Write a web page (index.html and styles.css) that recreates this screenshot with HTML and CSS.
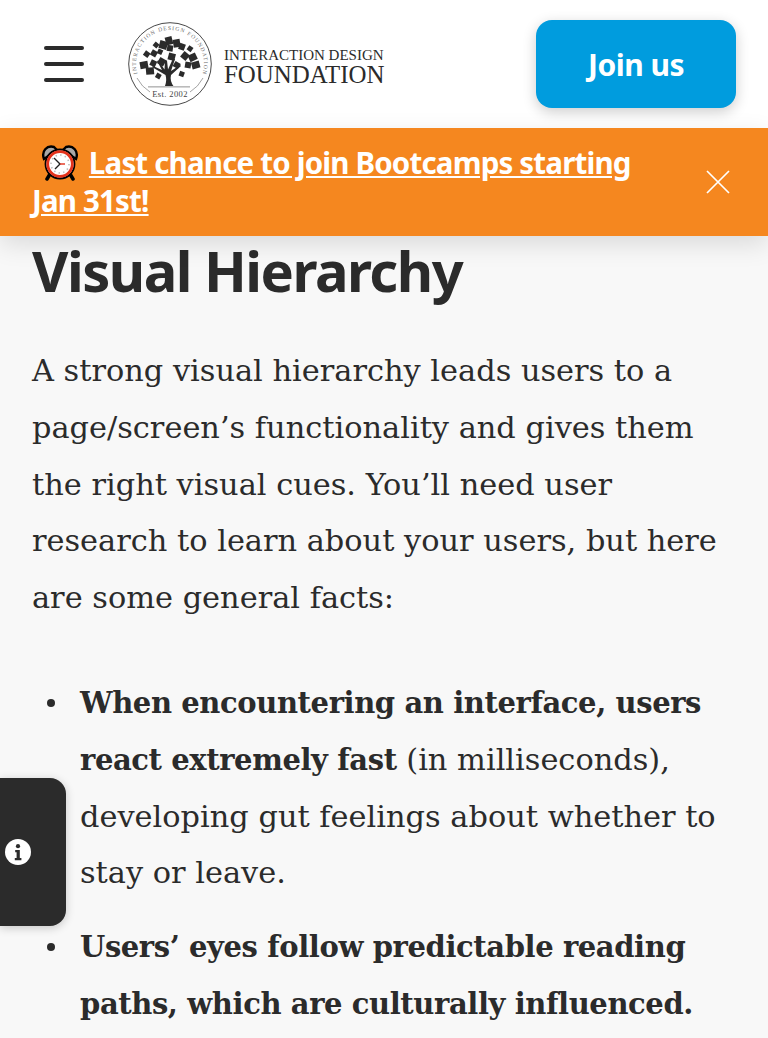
FILE: index.html
```html
<!DOCTYPE html>
<html lang="en">

<head>
    <meta charset="UTF-8">
    <meta name="viewport" content="width=device-width, initial-scale=1.0">
    <title>Visual Hierarchy</title>
    <link rel="stylesheet" href="styles.css">
</head>

<body>
    <header class="site-header">
        <button class="menu-btn" aria-label="Menu">
            <span></span>
            <span></span>
            <span></span>
        </button>
        <a href="#" class="logo">
            <svg class="logo-mark" viewBox="0 0 84 84" width="84" height="84">
                <defs>
                    <path id="logoArc" d="M10.05 53.6A34 34 0 1 1 73.95 53.6"></path>
                </defs>
                <circle cx="42" cy="42" r="41.3" fill="#fff" stroke="#333" stroke-width="0.9"></circle>
                <path d="M9 56a36 36 0 0 0 13 14M75 56a36 36 0 0 1-13 14" fill="none" stroke="#666" stroke-width="0.6"></path>
                <text class="logo-ring" font-size="5.6"><textPath href="#logoArc" startOffset="50%" text-anchor="middle" textLength="126">INTERACTION DESIGN FOUNDATION</textPath></text>
                <path d="M37 64c1.500-4 1.500-8 .5-11L24 45l1-1 9 4-5-9 1.500-.5 6 9 .5-9h2l1 9 5-11 2 .5-4 12 9-6 1 1-10 9c-1 4 0 8 3 12z" fill="#2b2b2b"></path>
                <g fill="#2b2b2b">
                    <rect x="26" y="20.300" width="5" height="5" transform="rotate(40 28 22.300)"></rect>
                    <rect x="31.300" y="19" width="8" height="8" transform="rotate(15 35.300 23)"></rect>
                    <rect x="37.500" y="14.700" width="7" height="8" transform="rotate(-15 41 18.700)"></rect>
                    <rect x="45.200" y="17.300" width="7" height="8" transform="rotate(-10 48.700 21.300)"></rect>
                    <rect x="51" y="21.500" width="6" height="6.500" transform="rotate(20 54 24.700)"></rect>
                    <rect x="59.500" y="24.200" width="5" height="5" transform="rotate(35 62 26.700)"></rect>
                    <rect x="16" y="29.300" width="5.500" height="5.500" transform="rotate(35 18.700 32)"></rect>
                    <rect x="23" y="28.300" width="6" height="6" transform="rotate(30 26 31.300)"></rect>
                    <rect x="29.500" y="27.200" width="5" height="5" transform="rotate(25 32 29.700)"></rect>
                    <rect x="39" y="23.300" width="6" height="6" transform="rotate(10 42 26.300)"></rect>
                    <rect x="53.500" y="30.500" width="7" height="7" transform="rotate(40 57 34)"></rect>
                    <rect x="60.700" y="31.800" width="8" height="7" transform="rotate(-25 64.700 35.300)"></rect>
                    <rect x="63.700" y="39.500" width="8" height="7" transform="rotate(-15 67.700 43)"></rect>
                    <rect x="57" y="40" width="6" height="6" transform="rotate(10 60 43)"></rect>
                    <rect x="12" y="39.500" width="8" height="7" transform="rotate(-10 16 43)"></rect>
                    <rect x="22.300" y="38.300" width="6" height="6" transform="rotate(25 25.300 41.300)"></rect>
                    <rect x="30.200" y="36.200" width="7" height="7" transform="rotate(30 33.700 39.700)"></rect>
                    <rect x="40.200" y="31.200" width="7" height="7" transform="rotate(15 43.700 34.700)"></rect>
                    <rect x="45.700" y="40" width="6" height="6" transform="rotate(30 48.700 43)"></rect>
                    <rect x="18" y="45.500" width="8" height="7" transform="rotate(-5 22 49)"></rect>
                    <rect x="27.800" y="51.500" width="5" height="5" transform="rotate(30 30.300 54)"></rect>
                    <rect x="51.200" y="49.500" width="5" height="5" transform="rotate(20 53.700 52)"></rect>
                </g>
                <rect x="20" y="64" width="42" height="1.600" fill="#bbb"></rect>
                <text class="logo-est" x="42" y="74.500" text-anchor="middle">Est. 2002</text>
            </svg>
            <span class="logo-text">
                <span class="logo-top">INTERACTION DESIGN</span>
                <span class="logo-name">FOUNDATION</span>
            </span>
        </a>
        <a href="#" class="join-btn">Join us</a>
    </header>

    <div class="banner">
        <p class="banner-text">
            <svg class="alarm" viewBox="0 0 38 36" width="38" height="36">
                <path d="M3 14C0 6 6 0 13 2l3 3zM35 14c3-8-3-14-10-12l-3 3z" fill="#a8a8a8" stroke="#000" stroke-width="2.400"></path>
                <path d="M9 29l-3 5M29 29l3 5" stroke="#000" stroke-width="3.500" stroke-linecap="round"></path>
                <circle cx="19" cy="19" r="14.500" fill="#fff" stroke="#000" stroke-width="1.800"></circle>
                <circle cx="19" cy="19" r="12.300" fill="#fff" stroke="#e4321b" stroke-width="2.800"></circle>
                <circle cx="19" cy="19" r="9" fill="none" stroke="#bbb" stroke-width="1.600" stroke-dasharray="1.400 3.300"></circle>
                <path d="M13 13l6 6-5 5" fill="none" stroke="#222" stroke-width="1.400"></path>
                <path d="M19 19h5" stroke="#e4321b" stroke-width="1.400"></path>
            </svg>
            <a href="#">Last chance to join Bootcamps starting<br>Jan 31st!</a>
        </p>
        <button class="banner-close" aria-label="Close">
            <svg viewBox="0 0 24 24" width="24" height="24">
                <path d="M1 1l22 22M23 1L1 23" fill="none" stroke="#fff" stroke-width="1.700"></path>
            </svg>
        </button>
    </div>

    <main class="article">
        <h1>Visual Hierarchy</h1>
        <p>A strong visual hierarchy leads users to a<br>page/screen’s functionality and gives them<br>the right visual cues. You’ll need user<br>research to learn about your users, but here<br>are some general facts:</p>
        <ul>
            <li><strong>When encountering an interface, users<br>react extremely fast</strong> (in milliseconds),<br>developing gut feelings about whether to<br>stay or leave.</li>
            <li><strong>Users’ eyes follow predictable reading<br>paths, which are culturally influenced.</strong></li>
        </ul>
    </main>

    <button class="info-tab" aria-label="Info">
        <svg viewBox="0 0 26 26" width="26" height="26">
            <circle cx="13" cy="13" r="13" fill="#fff"></circle>
            <circle cx="13" cy="7.200" r="2.100" fill="#2b2b2b"></circle>
            <path d="M10.200 11h4.600v8h1.600v2.200H9.800V19h1.800v-5.800h-1.400z" fill="#2b2b2b"></path>
        </svg>
    </button>
</body>

</html>
```

FILE: styles.css
```css
/* page */
html,
body {
    height: 1038px;
    overflow: hidden;
}

body {
    margin: 0;
    background-color: #f8f8f8;
    color: #2b2b2b;
    font-family: "DejaVu Serif", serif;
}

/* header */
.site-header {
    display: flex;
    align-items: center;
    height: 128px;
    padding: 0 32px 0 44px;
    background-color: #fff;
}

.menu-btn {
    display: flex;
    flex-direction: column;
    gap: 12px;
    width: 40px;
    padding: 0;
    border: none;
    background: none;
}

.menu-btn span {
    height: 4px;
    border-radius: 2px;
    background-color: #2b2b2b;
}

.logo {
    display: flex;
    align-items: center;
    gap: 12px;
    margin-left: 44px;
    color: #2b2b2b;
    text-decoration: none;
}

.logo-ring {
    font-family: "Liberation Serif", serif;
    fill: #666;
}

.logo-est {
    font-family: "Liberation Serif", serif;
    font-size: 8.500px;
    letter-spacing: 0.4px;
    fill: #444;
}

.logo-text {
    display: flex;
    flex-direction: column;
    padding-top: 6px;
    font-family: "Liberation Serif", serif;
    white-space: nowrap;
}

.logo-top {
    font-size: 15px;
    line-height: 15px;
}

.logo-name {
    font-size: 24.900px;
    line-height: 24px;
}

.join-btn {
    display: flex;
    align-items: center;
    justify-content: center;
    width: 200px;
    height: 88px;
    margin-left: auto;
    border-radius: 16px;
    background-color: #009cde;
    box-shadow: 0 4px 14px rgba(0, 0, 0, 0.2);
    color: #fff;
    font-family: "Noto Sans", sans-serif;
    font-size: 30px;
    font-weight: 700;
    letter-spacing: -0.5px;
    text-decoration: none;
}

/* banner */
.banner {
    position: relative;
    display: flex;
    align-items: center;
    justify-content: space-between;
    height: 108px;
    padding: 0 38px 0 32px;
    box-sizing: border-box;
    background-color: #f5871f;
    box-shadow: 0 8px 24px rgba(0, 0, 0, 0.12);
}

.banner-text {
    margin: 0;
    color: #fff;
    font-family: "Noto Sans", sans-serif;
    font-size: 29.500px;
    font-weight: 700;
    letter-spacing: -0.82px;
    line-height: 38px;
}

.banner-text a {
    color: #fff;
}

.alarm {
    margin: 0 3px 0 9px;
    vertical-align: -7px;
}

.banner-close {
    display: flex;
    padding: 0;
    border: none;
    background: none;
}

/* article */
.article {
    padding: 0 32px;
}

.article h1 {
    margin: 0 0 39px;
    font-family: "Noto Sans", sans-serif;
    font-size: 56px;
    font-weight: 700;
    letter-spacing: -1.500px;
    line-height: 68px;
}

.article p {
    margin: 0 0 48px;
}

.article p,
.article li {
    font-size: 30.400px;
    line-height: 56.800px;
    white-space: nowrap;
}

.article strong {
    font-size: 29px;
    letter-spacing: -0.4px;
}

.article ul {
    margin: 0;
    padding-left: 48px;
    list-style: none;
}

.article li {
    position: relative;
    margin-bottom: 17px;
}

.article li::before {
    content: "";
    position: absolute;
    top: 24px;
    left: -33px;
    width: 8px;
    height: 8px;
    border-radius: 50%;
    background-color: #2b2b2b;
}

/* info tab */
.info-tab {
    position: fixed;
    top: 778px;
    left: 0;
    display: flex;
    align-items: center;
    width: 66px;
    height: 148px;
    padding: 0 0 0 5px;
    border: none;
    border-radius: 0 16px 16px 0;
    background-color: #2b2b2b;
    box-shadow: 0 2px 10px rgba(0, 0, 0, 0.2);
}
```
